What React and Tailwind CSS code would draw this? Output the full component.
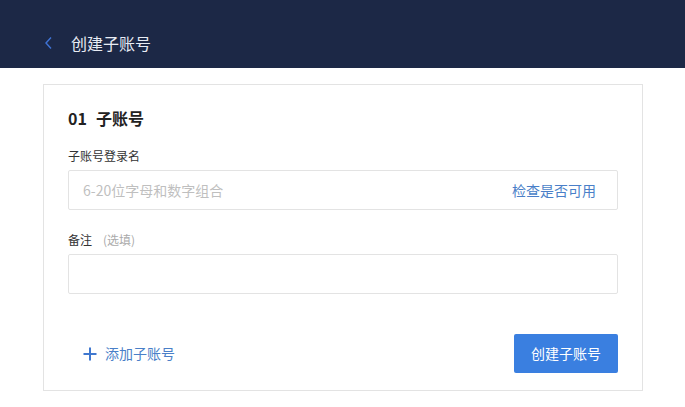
export default function App() {
  const font = { fontFamily: '"Microsoft YaHei", "Noto Sans CJK SC", "Liberation Sans", sans-serif' };
  return (
    <div className="w-[685px] h-[407px] bg-white overflow-hidden" style={font}>
      <div className="h-[68px] bg-[#1c2846] flex items-end pb-[13px] pl-[44px]">
        <div className="flex items-center h-[24px]">
          <svg width="10" height="14" viewBox="0 0 10 14" className="mr-[17px]">
            <path d="M7 1.5 L2 7 L7 12.5" fill="none" stroke="#3f73d6" strokeWidth="1.4" />
          </svg>
          <span className="text-[16px] text-[#e8ecf4]">创建子账号</span>
        </div>
      </div>
      <div className="ml-[43px] mt-[16px] w-[600px] h-[307px] border border-[#e3e3e3] px-[24px] pt-[21px] flex flex-col">
        <div className="flex items-center h-[24px] text-[16px] font-bold text-[#222]">
          <span>01</span>
          <span className="ml-[9px]">子账号</span>
        </div>
        <div className="mt-[18px] text-[12px] leading-[16px] text-[#333]">子账号登录名</div>
        <div className="mt-[6px] h-[40px] border border-[#e3e3e3] rounded-[2px] flex items-center justify-between px-[14px] text-[14px]">
          <span className="text-[#bfbfbf]">6-20位字母和数字组合</span>
          <span className="text-[#4a7fc8] mr-[7px]">检查是否可用</span>
        </div>
        <div className="mt-[22px] text-[12px] leading-[16px] text-[#333]">
          备注<span className="text-[#aaa] ml-[11px]">(选填)</span>
        </div>
        <div className="mt-[6px] h-[40px] border border-[#e3e3e3] rounded-[2px]"></div>
        <div className="mt-[40px] flex items-center justify-between">
          <div className="flex items-center ml-[15px] text-[14px] text-[#4a7fc8]">
            <svg width="14" height="14" viewBox="0 0 14 14" className="mr-[8px]">
              <path d="M7 0.5 V13.5 M0.5 7 H13.5" stroke="#3f77cf" strokeWidth="2" />
            </svg>
            <span>添加子账号</span>
          </div>
          <div className="w-[104px] h-[39px] bg-[#3a7fe0] rounded-[2px] flex items-center justify-center text-[14px] text-white">
            创建子账号
          </div>
        </div>
      </div>
    </div>
  );
}
